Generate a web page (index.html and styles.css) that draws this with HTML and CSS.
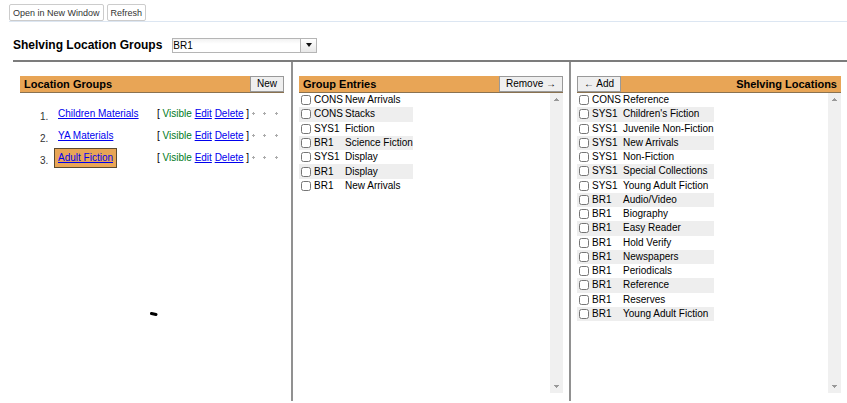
FILE: index.html
```html
<!DOCTYPE html>
<html lang="en">
<head>
<meta charset="utf-8">
<title>Shelving Location Groups</title>
<link rel="stylesheet" href="styles.css">
</head>
<body>
<nav class="toolbar">
  <button type="button" class="tool">Open in New Window</button>
  <button type="button" class="tool">Refresh</button>
</nav>
<main>
  <div class="heading">
    <h1><label for="library">Shelving Location Groups</label></h1>
    <div class="combo">
      <select id="library"><option>BR1</option></select>
      <span class="combo-arrow"><svg width="6" height="4" viewBox="0 0 6 4"><path d="M0 0h6L3 4z" fill="#111"/></svg></span>
    </div>
  </div>
  <div class="columns">
    <section class="column">
      <header class="bar"><h2>Location Groups</h2><button type="button">New</button></header>
      <ol class="groups">
        <li><span class="num">1.</span><span class="name"><a href="#">Children Materials</a></span><span class="actions">[ <span class="visible">Visible</span> <a href="#">Edit</a> <a href="#">Delete</a> ]</span><svg class="dots" width="27" height="4" viewBox="0 0 27 4"><path d="M0 1h1V0h1v1h1v1H2v1H1V2H0zM11 1h1V0h1v1h1v1h-1v1h-1V2h-1zM23 1h1V0h1v1h1v1h-1v1h-1V2h-1z"/></svg></li>
        <li><span class="num">2.</span><span class="name"><a href="#">YA Materials</a></span><span class="actions">[ <span class="visible">Visible</span> <a href="#">Edit</a> <a href="#">Delete</a> ]</span><svg class="dots" width="27" height="4" viewBox="0 0 27 4"><path d="M0 1h1V0h1v1h1v1H2v1H1V2H0zM11 1h1V0h1v1h1v1h-1v1h-1V2h-1zM23 1h1V0h1v1h1v1h-1v1h-1V2h-1z"/></svg></li>
        <li><span class="num">3.</span><span class="name selected"><a href="#">Adult Fiction</a></span><span class="actions">[ <span class="visible">Visible</span> <a href="#">Edit</a> <a href="#">Delete</a> ]</span><svg class="dots" width="27" height="4" viewBox="0 0 27 4"><path d="M0 1h1V0h1v1h1v1H2v1H1V2H0zM11 1h1V0h1v1h1v1h-1v1h-1V2h-1zM23 1h1V0h1v1h1v1h-1v1h-1V2h-1z"/></svg></li>
      </ol>
      <svg class="mark" width="8" height="4" viewBox="0 0 8 4"><path d="M1.5 1.5L6 2.5" stroke="#000" stroke-width="3" stroke-linecap="round"/></svg>
    </section>
    <section class="column">
      <header class="bar"><h2>Group Entries</h2><button type="button">Remove →</button></header>
      <div class="scroll">
        <table class="entries">
          <tr><td><input type="checkbox" id="e1"></td><td>CONS</td><td><label for="e1">New Arrivals</label></td></tr>
          <tr><td><input type="checkbox" id="e2"></td><td>CONS</td><td><label for="e2">Stacks</label></td></tr>
          <tr><td><input type="checkbox" id="e3"></td><td>SYS1</td><td><label for="e3">Fiction</label></td></tr>
          <tr><td><input type="checkbox" id="e4"></td><td>BR1</td><td><label for="e4">Science Fiction</label></td></tr>
          <tr><td><input type="checkbox" id="e5"></td><td>SYS1</td><td><label for="e5">Display</label></td></tr>
          <tr><td><input type="checkbox" id="e6"></td><td>BR1</td><td><label for="e6">Display</label></td></tr>
          <tr><td><input type="checkbox" id="e7"></td><td>BR1</td><td><label for="e7">New Arrivals</label></td></tr>
        </table>
        <div class="track"><svg width="5" height="3" viewBox="0 0 5 3"><path d="M0 3V2h1V1h1V0h1v1h1v1h1v1z"/></svg><svg width="5" height="3" viewBox="0 0 5 3"><path d="M0 0v1h1v1h1v1h1V2h1V1h1V0z"/></svg></div>
      </div>
    </section>
    <section class="column">
      <header class="bar"><button type="button">← Add</button><h2>Shelving Locations</h2></header>
      <div class="scroll">
        <table class="entries locations">
          <tr><td><input type="checkbox" id="s1"></td><td>CONS</td><td><label for="s1">Reference</label></td></tr>
          <tr><td><input type="checkbox" id="s2"></td><td>SYS1</td><td><label for="s2">Children's Fiction</label></td></tr>
          <tr><td><input type="checkbox" id="s3"></td><td>SYS1</td><td><label for="s3">Juvenile Non-Fiction</label></td></tr>
          <tr><td><input type="checkbox" id="s4"></td><td>SYS1</td><td><label for="s4">New Arrivals</label></td></tr>
          <tr><td><input type="checkbox" id="s5"></td><td>SYS1</td><td><label for="s5">Non-Fiction</label></td></tr>
          <tr><td><input type="checkbox" id="s6"></td><td>SYS1</td><td><label for="s6">Special Collections</label></td></tr>
          <tr><td><input type="checkbox" id="s7"></td><td>SYS1</td><td><label for="s7">Young Adult Fiction</label></td></tr>
          <tr><td><input type="checkbox" id="s8"></td><td>BR1</td><td><label for="s8">Audio/Video</label></td></tr>
          <tr><td><input type="checkbox" id="s9"></td><td>BR1</td><td><label for="s9">Biography</label></td></tr>
          <tr><td><input type="checkbox" id="s10"></td><td>BR1</td><td><label for="s10">Easy Reader</label></td></tr>
          <tr><td><input type="checkbox" id="s11"></td><td>BR1</td><td><label for="s11">Hold Verify</label></td></tr>
          <tr><td><input type="checkbox" id="s12"></td><td>BR1</td><td><label for="s12">Newspapers</label></td></tr>
          <tr><td><input type="checkbox" id="s13"></td><td>BR1</td><td><label for="s13">Periodicals</label></td></tr>
          <tr><td><input type="checkbox" id="s14"></td><td>BR1</td><td><label for="s14">Reference</label></td></tr>
          <tr><td><input type="checkbox" id="s15"></td><td>BR1</td><td><label for="s15">Reserves</label></td></tr>
          <tr><td><input type="checkbox" id="s16"></td><td>BR1</td><td><label for="s16">Young Adult Fiction</label></td></tr>
        </table>
        <div class="track"><svg width="5" height="3" viewBox="0 0 5 3"><path d="M0 3V2h1V1h1V0h1v1h1v1h1v1z"/></svg><svg width="5" height="3" viewBox="0 0 5 3"><path d="M0 0v1h1v1h1v1h1V2h1V1h1V0z"/></svg></div>
      </div>
    </section>
  </div>
</main>
</body>
</html>
```
FILE: styles.css
```css
* { box-sizing: border-box; }
body {
  margin: 0;
  background: #fff;
  color: #000;
  font: 10px/12px "Liberation Sans", Arial, sans-serif;
}
button, select { font: inherit; color: inherit; }
h1, h2 { margin: 0; }
a { color: #00e; }
.toolbar {
  display: flex;
  gap: 3px;
  margin-left: 9px;
  padding-top: 4px;
  border-bottom: 1px solid #dce6f2;
}
.tool {
  height: 17px;
  padding: 0 3px;
  background: #fff;
  border: 1px solid #ccc;
  border-radius: 2px;
  color: #333;
  font-size: 9px;
}
main { margin-left: 13px; }
.heading {
  display: flex;
  align-items: center;
  gap: 10px;
  height: 38px;
  padding-top: 8px;
}
h1 { font-size: 12px; line-height: 16px; }
.combo { position: relative; width: 145px; }
.combo select {
  display: block;
  width: 100%;
  height: 15px;
  padding: 1px 0 0;
  appearance: none;
  background: linear-gradient(#f2f2f2, #fff 5px);
  border: 1px solid #b5b5b5;
  border-radius: 0;
}
.combo-arrow {
  position: absolute;
  top: 0;
  right: 0;
  display: flex;
  align-items: center;
  justify-content: center;
  width: 17px;
  height: 15px;
  border: 1px solid #b5b5b5;
  background: linear-gradient(#fff, #e8e8e8);
  pointer-events: none;
}
.columns {
  display: grid;
  grid-template-columns: repeat(3, 1fr);
  border-top: 2px solid #7c7c7c;
}
.column { padding: 14px 7px 8px; }
.column + .column { padding: 14px 6px 8px; border-left: 2px solid #919191; }
.bar {
  display: flex;
  align-items: center;
  justify-content: space-between;
  height: 17px;
  background: #e8a556;
  border-bottom: 1px solid #8a7250;
}
.bar h2 { padding: 0 4px; font-size: 11px; line-height: 16px; }
.bar button {
  align-self: flex-start;
  flex: none;
  height: 16px;
  padding: 0 6px;
  background: #efefef;
  border: 1px solid #999;
  line-height: 14px;
}
.groups { margin: 10px 0 0; padding: 0 0 0 20px; list-style: none; }
.groups li {
  display: grid;
  grid-template-columns: 14px 103px 95px 27px;
  align-items: center;
  height: 22px;
}
.num { padding-top: 6px; color: #333; }
.name { justify-self: start; padding: 4px; white-space: nowrap; }
.selected { padding: 3px; background: #e8a556; border: 1px solid #5c4a30; }
.actions { white-space: nowrap; }
.visible { color: #007a1c; }
.dots { fill: #aaa; }
.mark { display: block; margin: 143px 0 0 130px; }
.scroll { display: flex; justify-content: space-between; height: 300px; }
.entries { align-self: flex-start; height: 100px; border-collapse: collapse; }
.locations { height: 228px; }
.entries td { height: 14px; padding: 0; line-height: 12px; white-space: nowrap; }
.entries td:first-child { width: 15px; padding-left: 2px; }
.entries td:nth-child(2) { width: 31px; }
.entries td:last-child { padding: 0; }
.entries tr:nth-child(even) { background: #eee; }
.entries input { display: block; width: 10px; height: 10px; margin: 0; }
.track {
  display: flex;
  flex-direction: column;
  align-items: center;
  justify-content: space-between;
  width: 13px;
  padding: 5px 0;
  background: #f0f0f0;
}
.track svg { fill: #999; }
```
